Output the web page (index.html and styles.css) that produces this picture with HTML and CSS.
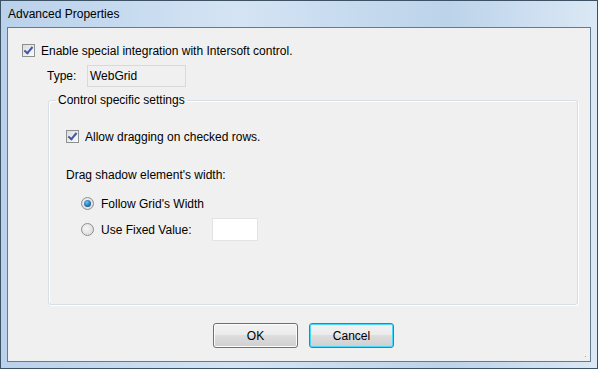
FILE: index.html
```html
<!DOCTYPE html>
<html lang="en">
<head>
  <meta charset="UTF-8">
  <title>Advanced Properties</title>
  <link rel="stylesheet" href="styles.css">
</head>
<body>
  <div class="window">
    <div class="titlebar">Advanced Properties</div>
    <div class="client">
      <!-- integration -->
      <label class="check-row top-check">
        <span class="checkbox checked"></span>
        <span>Enable special integration with Intersoft control.</span>
      </label>
      <div class="type-row">
        <span class="type-label">Type:</span>
        <span class="textbox readonly">WebGrid</span>
      </div>

      <fieldset class="group">
        <legend>Control specific settings</legend>
        <label class="check-row">
          <span class="checkbox checked"></span>
          <span>Allow dragging on checked rows.</span>
        </label>
        <p class="group-label">Drag shadow element's width:</p>
        <div class="radio-list">
          <label class="radio-row">
            <span class="radio selected"></span>
            <span>Follow Grid's Width</span>
          </label>
          <label class="radio-row">
            <span class="radio"></span>
            <span class="radio-text">Use Fixed Value:</span>
            <span class="textbox small"></span>
          </label>
        </div>
      </fieldset>

      <div class="buttons">
        <button class="btn">OK</button>
        <button class="btn focused">Cancel</button>
      </div>
      <span class="grip"></span>
    </div>
  </div>
</body>
</html>
```

FILE: styles.css
```css
body {
  margin: 0;
  padding: 0;
  font-family: "Liberation Sans", Arial, sans-serif;
  font-size: 12px;
  color: #000;
}
.window {
  width: 598px;
  height: 369px;
  box-sizing: border-box;
  border: 1px solid #3e5266;
  background: linear-gradient(90deg, #b9d1ea 0%, #d4e4f4 40%, #bcd3ea 75%, #dbe8f5 100%);
  display: flex;
  flex-direction: column;
  padding: 0 6px 6px 6px;
}
.titlebar {
  height: 26px;
  line-height: 27px;
  padding-left: 1px;
  flex-shrink: 0;
}
.client {
  flex: 1;
  position: relative;
  background-color: #f0f0f0;
  border: 1px solid #637a90;
  display: flex;
  flex-direction: column;
}
.check-row {
  display: flex;
  align-items: center;
  gap: 6px;
  height: 13px;
}
.top-check {
  margin: 16px 0 0 14px;
}
.checkbox {
  width: 11px;
  height: 11px;
  border: 1px solid #8e8f8f;
  background: linear-gradient(135deg, #dcdcdc, #fbfbfb);
  position: relative;
  flex-shrink: 0;
}
.checkbox.checked::after {
  content: "";
  position: absolute;
  left: 3px;
  top: 0px;
  width: 3px;
  height: 7px;
  border: solid #3e58a3;
  border-width: 0 2px 2px 0;
  transform: rotate(40deg);
}
.type-row {
  display: flex;
  align-items: center;
  margin: 8px 0 0 39px;
}
.type-label {
  width: 40px;
}
.textbox {
  display: inline-block;
  box-sizing: border-box;
  border: 1px solid #d9d9d9;
  background-color: #fff;
}
.textbox.readonly {
  width: 99px;
  height: 22px;
  line-height: 20px;
  padding-left: 2px;
  background-color: #f0f0f0;
}
.textbox.small {
  width: 46px;
  height: 23px;
  border-color: #e3e3e3;
}
.group {
  margin: 6px 12px 0 40px;
  height: 212px;
  box-sizing: border-box;
  border: 1px solid #d5dfe5;
  box-shadow: inset 1px 1px 0 #fff, 1px 1px 0 #fff;
  border-radius: 3px;
  padding: 23px 0 0 17px;
}
.group legend {
  padding: 0 2px;
  margin-left: -10px;
}
.group-label {
  margin: 25px 0 0 0;
}
.radio-list {
  margin: 10px 0 0 15px;
  display: flex;
  flex-direction: column;
  gap: 3px;
}
.radio-row {
  display: flex;
  align-items: center;
  gap: 7px;
  height: 23px;
}
.radio-text {
  width: 104px;
}
.radio {
  width: 11px;
  height: 11px;
  border-radius: 50%;
  border: 1px solid #8f8f8f;
  background: radial-gradient(circle at 40% 40%, #f6f6f6 0%, #d4d4d4 100%);
  position: relative;
}
.radio.selected::after {
  content: "";
  position: absolute;
  left: 2px;
  top: 2px;
  width: 7px;
  height: 7px;
  border-radius: 50%;
  background: radial-gradient(circle at 40% 35%, #6dc5f0 0%, #1f6ea8 60%, #174a72 100%);
}
.buttons {
  display: flex;
  justify-content: center;
  gap: 11px;
  margin-top: 18px;
  padding-left: 9px;
}
.btn {
  width: 85px;
  height: 25px;
  font-family: inherit;
  font-size: 12px;
  border: 1px solid #707070;
  border-radius: 3px;
  background: linear-gradient(#f2f2f2 0%, #ebebeb 50%, #dddddd 50%, #cfcfcf 100%);
  box-shadow: inset 0 0 0 1px #fcfcfc;
  padding: 0;
}
.btn.focused {
  border-color: #3c7fb1;
  box-shadow: inset 0 0 0 1px #48d8fb;
}
.grip {
  position: absolute;
  right: 2px;
  bottom: 2px;
  width: 7px;
  height: 7px;
  background:
    radial-gradient(circle, #a0a0a0 0.8px, transparent 1px) 0 0 / 3px 3px;
  clip-path: polygon(100% 0, 100% 100%, 0 100%);
}
```
